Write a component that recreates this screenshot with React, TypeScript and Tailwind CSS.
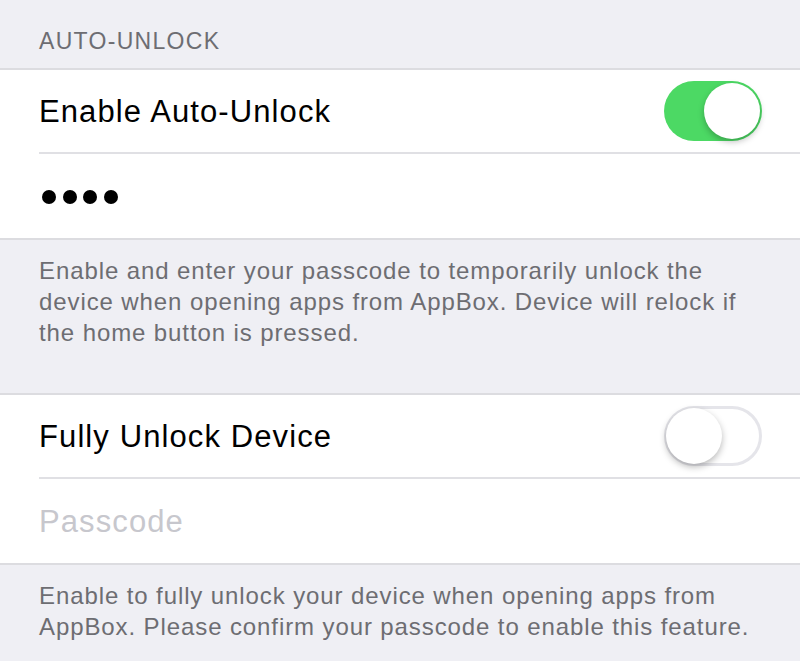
const font = { fontFamily: '"Liberation Sans", Arial, sans-serif' };

function Toggle({ on }: { on: boolean }) {
  return on ? (
    <div className="relative w-[98px] h-[60px] rounded-full bg-[#4cd964]">
      <div className="absolute right-[2px] top-[2px] w-[56px] h-[56px] rounded-full bg-white shadow-[0_3px_6px_rgba(0,0,0,0.25)]" />
    </div>
  ) : (
    <div className="relative w-[98px] h-[60px] rounded-full bg-white border-[3px] border-[#e5e5ea]">
      <div className="absolute left-[-1px] top-[-1px] w-[56px] h-[56px] rounded-full bg-white shadow-[0_3px_7px_rgba(0,0,0,0.28)]" />
    </div>
  );
}

function Row({ children, last }: { children: React.ReactNode; last?: boolean }) {
  return (
    <div className="pl-[39px]">
      <div className={`h-[84px] flex items-center justify-between pr-[38px] ${last ? "" : "border-b-2 border-[#e0e0e4]"}`}>
        {children}
      </div>
    </div>
  );
}

export default function App() {
  return (
    <div className="w-[800px] h-[661px] bg-[#efeff4] overflow-hidden" style={font}>
      <div className="h-[68px] px-[39px] pt-[26px]">
        <div className="text-[23px] leading-[30px] text-[#6d6d72] tracking-[1.3px]">AUTO-UNLOCK</div>
      </div>

      <div className="bg-white border-y-2 border-[#dcdce0]">
        <Row>
          <span className="text-[31px] text-black tracking-[1.1px] pt-[2px]">Enable Auto-Unlock</span>
          <Toggle on />
        </Row>
        <Row last>
          <div className="flex gap-[6.5px] pl-[3px] pt-[2px]">
            <span className="w-[14px] h-[14px] rounded-full bg-black" />
            <span className="w-[14px] h-[14px] rounded-full bg-black" />
            <span className="w-[14px] h-[14px] rounded-full bg-black" />
            <span className="w-[14px] h-[14px] rounded-full bg-black" />
          </div>
        </Row>
      </div>

      <div className="h-[153px] px-[39px] pt-[15px]">
        <p className="text-[24px] leading-[31px] text-[#6d6d72] tracking-[0.9px] w-[735px]">
          Enable and enter your passcode to temporarily unlock the device when opening apps from AppBox. Device will relock if the home button is pressed.
        </p>
      </div>

      <div className="bg-white border-y-2 border-[#dcdce0]">
        <Row>
          <span className="text-[31px] text-black tracking-[1.1px] pt-[2px]">Fully Unlock Device</span>
          <Toggle on={false} />
        </Row>
        <Row last>
          <span className="text-[31px] text-[#c7c7cd] tracking-[1.1px] pt-[2px]">Passcode</span>
        </Row>
      </div>

      <div className="px-[39px] pt-[15px]">
        <p className="text-[24px] leading-[31px] text-[#6d6d72] tracking-[0.9px] w-[735px]">
          Enable to fully unlock your device when opening apps from AppBox. Please confirm your passcode to enable this feature.
        </p>
      </div>
    </div>
  );
}
